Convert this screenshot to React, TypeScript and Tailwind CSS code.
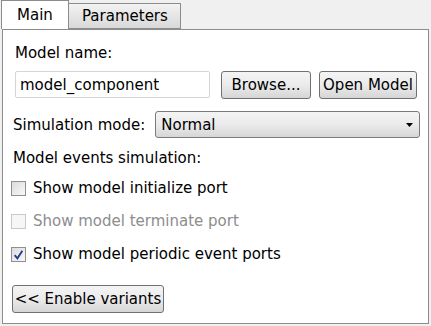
import React from "react";

const font = "font-['DejaVu_Sans',Tahoma,sans-serif]";

function Button({ label, className = "" }: { label: string; className?: string }) {
  return (
    <div
      className={`flex h-[28px] items-center justify-center rounded-[3px] border border-[#707070] bg-gradient-to-b from-[#f4f4f4] via-[#ebebeb] to-[#d6d6d6] text-[15px] leading-[18px] text-black ${className}`}
    >
      {label}
    </div>
  );
}

function Check({
  label,
  checked = false,
  disabled = false,
}: {
  label: string;
  checked?: boolean;
  disabled?: boolean;
}) {
  return (
    <div className="flex h-[18px] items-center">
      <div
        className={`flex h-[15px] w-[15px] items-center justify-center border ${
          disabled ? "border-[#c9c9c9] bg-[#f6f6f6]" : "border-[#8e8f8f] bg-gradient-to-br from-[#dcdcdc] to-[#f8f8f8]"
        }`}
      >
        {checked && (
          <svg width="11" height="11" viewBox="0 0 10 10">
            <path d="M1.5 5.5 L4 8.5 L8.5 1.5" fill="none" stroke="#21418d" strokeWidth="1.7" />
          </svg>
        )}
      </div>
      <span className={`ml-[7px] text-[15px] leading-[18px] ${disabled ? "text-[#8d8d8d]" : "text-black"}`}>
        {label}
      </span>
    </div>
  );
}

export default function App() {
  return (
    <div className={`h-[326px] w-[431px] bg-[#f0f0f0] ${font}`}>
      {/* Tabs */}
      <div className="flex h-[29px] items-end pl-[1px] pt-[1px]">
        <div className="relative z-10 flex h-[29px] w-[68px] items-start border border-b-0 border-[#8c8c8c] bg-white pl-[15px] pt-[5px] text-[15px] leading-[18px] text-black">
          Main
        </div>
        <div className="flex h-[26px] w-[112px] items-start border-y border-r border-[#8c8c8c] bg-gradient-to-b from-[#f2f2f2] to-[#d9d9d9] pl-[13px] pt-[3px] text-[15px] leading-[18px] text-black">
          Parameters
        </div>
      </div>

      {/* Panel */}
      <div className="ml-[2px] flex h-[295px] w-[427px] flex-col border border-[#8c8c8c] bg-white pl-[8px]">
        <div className="mt-[14px] pl-[4px] text-[15px] leading-[18px] text-black">Model name:</div>

        <div className="mt-[9px] flex items-start">
          <div className="ml-[4px] flex h-[27px] w-[195px] items-center rounded-[2px] border border-[#d5d5d5] pl-[4px] text-[15px] leading-[18px] text-black">
            model_component
          </div>
          <Button label="Browse..." className="ml-[11px] w-[90px]" />
          <Button label="Open Model" className="ml-[8px] w-[98px]" />
        </div>

        <div className="mt-[12px] flex items-center">
          <span className="ml-[2px] text-[15px] leading-[18px] text-black">Simulation mode:</span>
          <div className="ml-[10px] flex h-[27px] w-[265px] items-center justify-between rounded-[3px] border border-[#7a7a7a] bg-gradient-to-b from-[#f4f4f4] via-[#ebebeb] to-[#d6d6d6] pl-[5px] pr-[6px]">
            <span className="text-[15px] leading-[18px] text-black">Normal</span>
            <svg width="7" height="4" viewBox="0 0 7 4">
              <path d="M0 0 H7 L3.5 4 Z" fill="#000" />
            </svg>
          </div>
        </div>

        <div className="mt-[11px] pl-[2px] text-[15px] leading-[18px] text-black">Model events simulation:</div>

        <div className="mt-[12px] flex flex-col gap-[15px]">
          <Check label="Show model initialize port" />
          <Check label="Show model terminate port" disabled />
          <Check label="Show model periodic event ports" checked />
        </div>

        <div className="mt-[22px] flex">
          <Button label="<< Enable variants" className="ml-[1px] w-[152px]" />
        </div>
      </div>
    </div>
  );
}
